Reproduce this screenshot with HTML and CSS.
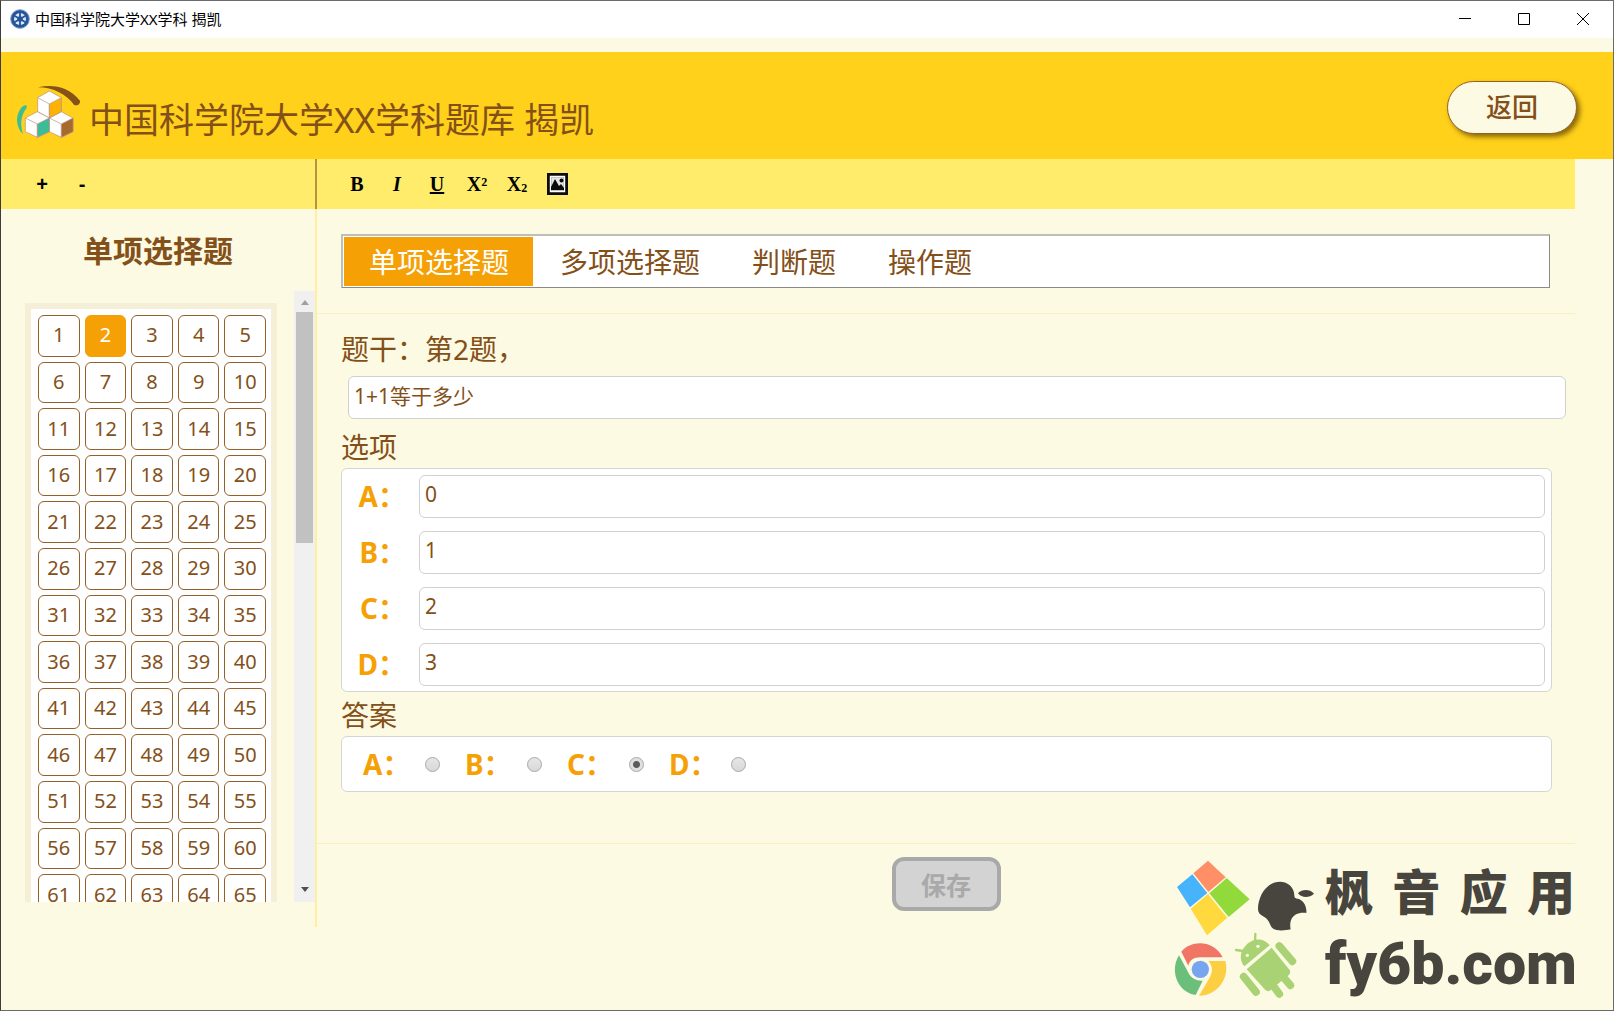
FILE: index.html
```html
<!doctype html>
<html lang="zh-CN">
<head>
    <meta charset="UTF-8">
    <meta name="viewport" content="width=device-width, initial-scale=1.0">
    <title>中国科学院大学XX学科 揭凯</title>

    <link rel="stylesheet" href="styles.css">
</head>
<body>
    <div class="titlebar">
        <svg class="app-icon" viewBox="0 0 20 20">
            <circle cx="10" cy="10" r="9.3" fill="#24549a" stroke="#7f9cc8" stroke-width="1"/>
            <circle cx="10" cy="10" r="6" fill="#dfe8f5"/>
            <path d="M10 3.500v13M4.400 6.800l11.200 6.400M15.600 6.800l-11.200 6.400" stroke="#24549a" stroke-width="1.800"/>
            <circle cx="10" cy="10" r="2.800" fill="#24549a"/>
        </svg>
        <span class="window-title">中国科学院大学XX学科 揭凯</span>
        <button class="window-btn" type="button" aria-label="最小化"><svg viewBox="0 0 12 12"><path d="M0 5.5h12"/></svg></button>
        <button class="window-btn" type="button" aria-label="最大化"><svg viewBox="0 0 12 12"><path d="M.5.5h11v11H.5z"/></svg></button>
        <button class="window-btn" type="button" aria-label="关闭"><svg viewBox="0 0 12 12"><path d="M0 0l12 12M12 0L0 12"/></svg></button>
    </div>

    <header class="header">
        <svg class="logo" viewBox="48 252 195 165">
            <path d="M80 316C64 314 52 338 51 360c0 16 8 34 18 42C60 374 62 346 80 324z" fill="#3dbd95"/>
            <path d="M114 262c42-10 90-4 126 40 2 10-10 18-18 12C200 284 160 262 114 262z" fill="#855218"/>
            <g fill="#fff" stroke="#b98f86" stroke-width="2" stroke-linejoin="round">
                <path d="M148 273l36 20v42l-36 19-35-19v-42z"/>
                <path d="M112 335l36 19v41l-36 17-36-17v-41z"/>
                <path d="M184 335l35 19v41l-35 17-36-17v-41z"/>
                <path d="M148 312l36-19v42l-36 19z" fill="#ffb300"/>
                <path d="M112 372l36-18v41l-36 17z" fill="#3dbd95"/>
                <path d="M184 372l35-18v41l-35 17z" fill="#a56a2c"/>
                <path d="M113 293l35 19v42M76 354l36 18v40M148 354l36 18v40" fill="none"/>
            </g>
        </svg>
        <h1>中国科学院大学XX学科题库 揭凯</h1>
        <button class="back-btn" type="button">返回</button>
    </header>

    <div class="layout">
        <aside class="sidebar">
            <div class="toolbar sidebar-toolbar">
                <button type="button">+</button>
                <button type="button">-</button>
            </div>
            <h2>单项选择题</h2>
            <div class="question-list">
                <div class="numbers" id="numbers"></div>
                <div class="scrollbar">
                    <svg viewBox="0 0 8 5"><path d="M0 5l4-5 4 5z" fill="#a0a0a0"/></svg>
                    <div class="thumb"></div>
                    <svg viewBox="0 0 8 5"><path d="M0 0l4 5 4-5z" fill="#505050"/></svg>
                </div>
            </div>
        </aside>

        <main class="main">
            <div class="toolbar editor-toolbar">
                <button type="button">B</button>
                <button type="button"><i>I</i></button>
                <button type="button"><u>U</u></button>
                <button type="button">X²</button>
                <button type="button">X<small>2</small></button>
                <button type="button" aria-label="插入图片">
                    <svg viewBox="0 0 21 22">
                        <path d="M0 0h21v22H0z" fill="#0c0c0c"/>
                        <path d="M3.500 3.500h14v15h-14z" fill="none" stroke="#fff" stroke-width="1.400"/>
                        <path d="M4.200 4.200h12.600v13.600H4.200z" fill="#e6e6e6"/>
                        <path d="M4 17v-3l4-8 4 7 2-2 3 4v2z" fill="#0c0c0c"/>
                        <circle cx="14.500" cy="7.500" r="2" fill="#0c0c0c"/>
                    </svg>
                </button>
            </div>

            <nav class="tabs">
                <button class="tab active" type="button">单项选择题</button>
                <button class="tab" type="button">多项选择题</button>
                <button class="tab" type="button">判断题</button>
                <button class="tab" type="button">操作题</button>
            </nav>

            <form id="questionForm">
                <div class="fields">
                    <label class="field-title" for="stem">题干：第2题，</label>
                    <input class="text-box stem" type="text" id="stem" value="1+1等于多少">

                    <h3 class="field-title">选项</h3>
                    <div class="options">
                        <label for="optionA">A：</label>
                        <input class="text-box" type="text" id="optionA" value="0">
                        <label for="optionB">B：</label>
                        <input class="text-box" type="text" id="optionB" value="1">
                        <label for="optionC">C：</label>
                        <input class="text-box" type="text" id="optionC" value="2">
                        <label for="optionD">D：</label>
                        <input class="text-box" type="text" id="optionD" value="3">
                    </div>

                    <h3 class="field-title">答案</h3>
                    <div class="answers">
                        <label>A：<input type="radio" name="answer" value="A"></label>
                        <label>B：<input type="radio" name="answer" value="B"></label>
                        <label>C：<input type="radio" name="answer" value="C" checked></label>
                        <label>D：<input type="radio" name="answer" value="D"></label>
                    </div>
                </div>

                <div class="actions">
                    <button class="save-btn" type="submit" disabled>保存</button>
                </div>
            </form>
        </main>
    </div>

    <div class="watermark">
        <svg viewBox="102 30 423 420">
            <!-- Windows -->
            <path d="M204 35l53 50-52 44-45-56z" fill="#ff8f66"/>
            <path d="M157 76l45 56-52 43-39-61z" fill="#47b3fb"/>
            <path d="M260 87l69 64-63 53-58-71z" fill="#92da3c"/>
            <path d="M204 135l58 71-61 53-49-80z" fill="#ffd93d"/>
            <!-- Apple -->
            <path d="M420 98c24 0 42 17 43 40-1 8 4 10 10 11 16 4 28 20 26 43-20-3-40 4-46 22-3 8-3 18-1 27-18 4-42 5-52-2-10-6-10-18-17-26-8-12-28-12-29-32 0-40 26-83 66-83z" fill="#47453d"/>
            <path d="M474 133c12-12 34-14 48 1-14 13-36 14-48-1z" fill="#47453d"/>
            <!-- Chrome -->
            <path d="M124 308c30-38 100-34 124 17h-66c-22 0-34 10-37 25z" fill="#f07565"/>
            <path d="M117 319l29 54c8 16 24 23 42 22l-21 43c-52-8-80-70-50-119z" fill="#6bbf7b"/>
            <path d="M205 336h51c14 52-24 104-79 104l31-52c12-20 10-38-3-52z" fill="#fcce42"/>
            <circle cx="181" cy="361" r="26" fill="#77a5f0"/>
            <!-- Android -->
            <g fill="#a9d275" stroke="#a9d275" stroke-linecap="round">
                <path d="M389 289l-76 63c-14-16-14-40 0-57 22-30 58-30 76-6z" stroke="none"/>
                <path d="M395 296l54 67c3 5 2 10-2 14l-56 47c-5 4-10 3-15-1l-56-62z" stroke="none"/>
                <path d="M346 255l-1 24M288 303l22 3" stroke-width="7"/>
                <path d="M418 291l39 46M311 383l37 46M392 400l26 35M428 382l23 27" stroke-width="23"/>
                <circle cx="354" cy="292" r="5" fill="#fdfae3" stroke="none"/>
                <circle cx="322" cy="319" r="5" fill="#fdfae3" stroke="none"/>
            </g>
        </svg>
        <div class="watermark-text">
            <div class="watermark-name"><span>枫</span><span>音</span><span>应</span><span>用</span></div>
            <div class="watermark-site">fy6b.com</div>
        </div>
    </div>

    <script>
        // Fill the question list, question 2 is the one being edited
        const numbers = document.getElementById('numbers');
        const total = 65;
        const current = 2;

        for (let i = 1; i <= total; i++) {
            const button = document.createElement('button');
            button.type = 'button';
            button.textContent = i;
            if (i === current) {
                button.className = 'current';
            }
            numbers.appendChild(button);
        }
    </script>
</body>
</html>
```
FILE: styles.css
```css
* {
    box-sizing: border-box;
}

body {
    margin: 0;
    min-height: 100vh;
    position: relative;
    overflow: hidden;
    border: 1px solid #6b6b6b;
    border-left-color: #3f3b38;
    background-color: #fdfae3;
    color: #845019;
    font-family: "Noto Sans", "Noto Sans CJK SC", sans-serif;
}

button, input {
    font-family: inherit;
    color: inherit;
}

button {
    padding: 0;
    border: none;
    background: none;
    cursor: pointer;
}

h1, h2, h3 {
    margin: 0;
    font-weight: normal;
}

/* Window title bar */
.titlebar {
    display: flex;
    align-items: center;
    height: 37px;
    padding: 0 1px 2px 9px;
    background-color: #fff;
    color: #000;
}

.app-icon {
    width: 20px;
    height: 20px;
    margin-right: 5px;
}

.window-title {
    flex: 1;
    font-size: 15px;
}

.window-btn {
    display: flex;
    align-items: center;
    justify-content: center;
    width: 59px;
    height: 34px;
}

.window-btn svg {
    width: 12px;
    height: 12px;
    fill: none;
    stroke: #000;
}

/* Header */
.header {
    display: flex;
    align-items: center;
    height: 107px;
    margin-top: 14px;
    padding: 0 36px 0 15px;
    background-color: #ffd11a;
}

.logo {
    width: 65px;
    height: 55px;
    margin: 12px 8px 0 0;
}

.header h1 {
    flex: 1;
    padding-top: 28px;
    font-size: 35px;
    line-height: 50px;
}

.back-btn {
    width: 130px;
    height: 53px;
    margin-top: 4px;
    padding-bottom: 4px;
    border: 1px solid #946029;
    border-radius: 27px;
    background-color: #fdfae3;
    box-shadow: 3px 3px 5px rgba(90, 60, 0, 0.7);
    font-size: 26px;
    font-weight: 500;
}

/* Page layout */
.layout {
    display: flex;
    margin-right: 38px;
}

.sidebar {
    width: 314px;
}

.main {
    flex: 1;
    height: 768px;
    border-left: 2px solid #fff0a0;
}

.toolbar {
    display: flex;
    align-items: center;
    height: 50px;
    background-color: #ffec6b;
    color: #000;
}

.toolbar button {
    display: flex;
    align-items: center;
    justify-content: center;
    width: 40px;
    height: 40px;
    font-size: 20px;
    font-weight: bold;
}

.toolbar small {
    align-self: flex-end;
    padding-bottom: 8px;
    font-size: 12px;
}

.sidebar-toolbar {
    padding-left: 21px;
    font-family: "Liberation Sans", sans-serif;
}

.editor-toolbar {
    margin-left: -2px;
    padding-left: 20px;
    border-left: 2px solid #b8923f;
    font-family: "Liberation Serif", serif;
}

.toolbar svg {
    width: 21px;
    height: 22px;
}

/* Question list */
.sidebar h2 {
    padding: 20px 0 18px;
    font-size: 30px;
    line-height: 44px;
    font-weight: bold;
    text-align: center;
}

.question-list {
    display: flex;
    justify-content: space-between;
    height: calc(100vh - 400px);
    padding-left: 24px;
    overflow: hidden;
}

.numbers {
    display: grid;
    grid-template-columns: repeat(5, 1fr);
    align-content: start;
    gap: 5px;
    width: 252px;
    height: max-content;
    margin-top: 12px;
    padding: 6px 5px 6px 7px;
    border: 6px solid #f4efd6;
    background-color: #fff;
}

.numbers button {
    aspect-ratio: 1;
    padding-bottom: 2px;
    border: 1px solid #946029;
    border-radius: 6px;
    font-size: 20px;
}

.numbers .current {
    border-color: #f5a105;
    background-color: #f5a105;
    color: #fff;
}

.scrollbar {
    display: flex;
    flex-direction: column;
    align-items: center;
    width: 21px;
    padding: 9px 0 10px;
    background-color: #f0f0f0;
}

.scrollbar svg {
    width: 8px;
    height: 5px;
}

.thumb {
    width: 17px;
    height: 39%;
    margin: 7px 0 auto;
    background-color: #c1c1c1;
}

/* Tabs */
.tabs {
    display: flex;
    gap: 2px;
    margin: 25px 25px 25px 24px;
    padding: 1px;
    border: 1px solid #8a8a86;
    border-top: 2px solid #bfbfba;
    border-left: 2px solid #bfbfba;
    background-color: #fff;
}

.tab {
    height: 49px;
    padding: 0 25px 2px 25px;
    font-size: 28px;
}

.tab.active {
    padding: 0 24px 2px 25px;
    background-color: #f5a105;
    color: #fff;
}

/* Question form */
.fields {
    padding: 15px 23px 51px 24px;
    border-top: 1px solid #faf0bd;
    border-bottom: 1px solid #faf0bd;
}

.field-title {
    display: block;
    font-size: 28px;
    line-height: 40px;
}

.text-box {
    width: 100%;
    height: 43px;
    padding: 0 5px 6px;
    border: 1px solid #d0d0d0;
    border-radius: 6px;
    background-color: #fff;
    font-size: 21px;
}

.stem {
    display: block;
    width: calc(100% + 7px);
    margin: 7px 0 8px 7px;
}

.options, .answers {
    border: 1px solid #d6d6d0;
    border-radius: 6px;
    background-color: #fff;
}

.options {
    display: grid;
    grid-template-columns: 58px 1fr;
    gap: 13px;
    padding: 6px 6px 5px;
    margin: 1px 0 3px;
}

.options label, .answers label {
    color: #f5a105;
    font-size: 28px;
    font-weight: bold;
    line-height: 43px;
}

.options label {
    text-align: right;
}

.answers {
    display: flex;
    height: 56px;
    padding-left: 21px;
    margin-top: 1px;
}

.answers label {
    display: flex;
    align-items: center;
    justify-content: space-between;
    width: 77px;
    margin-right: 25px;
}

.answers input {
    appearance: none;
    width: 15px;
    height: 15px;
    margin: 0;
    border: 1px solid #a8a8a8;
    border-radius: 50%;
    background: linear-gradient(#e6e6e6, #d8d8d8);
}

.answers input:checked {
    background: radial-gradient(circle, #5c5c5c 3px, #e0e0e0 4px);
}

.actions {
    padding-top: 13px;
    text-align: center;
}

.save-btn {
    width: 109px;
    height: 54px;
    border: 4px solid #a9a9a9;
    border-radius: 12px;
    background-color: #d3d3d3;
    color: #a9a9a9;
    font-size: 25px;
    font-weight: bold;
}

/* Watermark in the corner of the window */
.watermark {
    display: flex;
    align-items: center;
    gap: 10px;
    position: absolute;
    right: 38px;
    bottom: 6px;
    color: #47453d;
}

.watermark svg {
    width: 141px;
    height: 140px;
}

.watermark-text {
    width: 250px;
    font-weight: 900;
}

.watermark-name {
    display: flex;
    justify-content: space-between;
    font-family: "Noto Sans CJK SC", sans-serif;
    font-size: 48px;
    line-height: 70px;
}

.watermark-site {
    font-family: Roboto, sans-serif;
    font-size: 59px;
    line-height: 80px;
}
```
